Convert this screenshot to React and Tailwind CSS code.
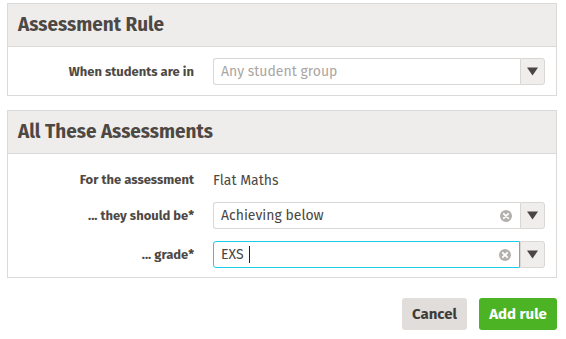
import React from "react";

function Arrow() {
  return (
    <div className="flex w-[25px] items-center justify-center self-stretch rounded-r-[3px] border border-[#d9d6d4] bg-[#efeeec]">
      <svg width="11" height="9" viewBox="0 0 11 9">
        <path d="M0 0.5 H11 L5.5 8.5 Z" fill="#4a4542" />
      </svg>
    </div>
  );
}

function Clear() {
  return (
    <svg width="12" height="12" viewBox="0 0 12 12" className="mr-[8px]">
      <circle cx="6" cy="6" r="6" fill="#b3b0ae" />
      <path d="M3.8 3.8 L8.2 8.2 M8.2 3.8 L3.8 8.2" stroke="#fff" strokeWidth="1.8" strokeLinecap="round" />
    </svg>
  );
}

function Select({ text, placeholder, clear, focused, caret }) {
  return (
    <div className="flex h-[27px] w-[332px]">
      <div
        className={
          focused
            ? "flex flex-1 items-center rounded-l-[3px] border border-[#1ccfe6] pl-[7px]"
            : "flex flex-1 items-center rounded-l-[3px] border border-r-0 border-[#d9d6d4] pl-[7px]"
        }
      >
        <span className={placeholder ? "text-[14px] text-[#aaa6a3]" : "text-[14px] text-[#4a4542]"}>
          {text}
        </span>
        {caret && <span className="ml-[5px] h-[17px] w-[1px] bg-[#222]" />}
        <div className="flex-1" />
        {clear && <Clear />}
      </div>
      <Arrow />
    </div>
  );
}

function Label({ children }) {
  return (
    <div className="w-[186px] shrink-0 text-right text-[13px] font-bold text-[#4e4844]">{children}</div>
  );
}

export default function App() {
  return (
    <div
      className="h-[339px] w-[566px] bg-white pl-[7px] pr-[9px] pt-[3px]"
      style={{ fontFamily: '"Fira Sans", "PT Sans", "Open Sans", "Noto Sans", sans-serif' }}
    >
      <div className="border border-[#dcdad8]">
        <div className="flex h-[43px] items-center border-b border-[#dcdad8] bg-[#eeedeb] pl-[10px]">
          <h2 className="text-[19px] font-bold text-[#4e4844]">Assessment Rule</h2>
        </div>
        <div className="flex items-center gap-[19px] pb-[10px] pt-[11px]">
          <Label>When students are in</Label>
          <Select text="Any student group" placeholder />
        </div>
      </div>

      <div className="mt-[14px] border border-[#dcdad8]">
        <div className="flex h-[43px] items-center border-b border-[#dcdad8] bg-[#eeedeb] pl-[10px]">
          <h2 className="text-[19px] font-bold text-[#4e4844]">All These Assessments</h2>
        </div>
        <div className="flex flex-col gap-[12px] pb-[9px] pt-[16px]">
          <div className="flex h-[20px] items-center gap-[19px]">
            <Label>For the assessment</Label>
            <span className="text-[14px] text-[#4e4844]">Flat Maths</span>
          </div>
          <div className="flex items-center gap-[19px]">
            <Label>... they should be*</Label>
            <Select text="Achieving below" clear />
          </div>
          <div className="flex items-center gap-[19px]">
            <Label>... grade*</Label>
            <Select text="EXS" clear focused caret />
          </div>
        </div>
      </div>

      <div className="mt-[20px] flex justify-end gap-[12px]">
        <button className="h-[32px] w-[65px] rounded-[3px] bg-[#e0dddb] text-[15px] font-bold text-[#3f3b39]">
          Cancel
        </button>
        <button className="h-[32px] w-[78px] rounded-[3px] bg-[#4cb424] text-[15px] font-bold text-white">
          Add rule
        </button>
      </div>
    </div>
  );
}
